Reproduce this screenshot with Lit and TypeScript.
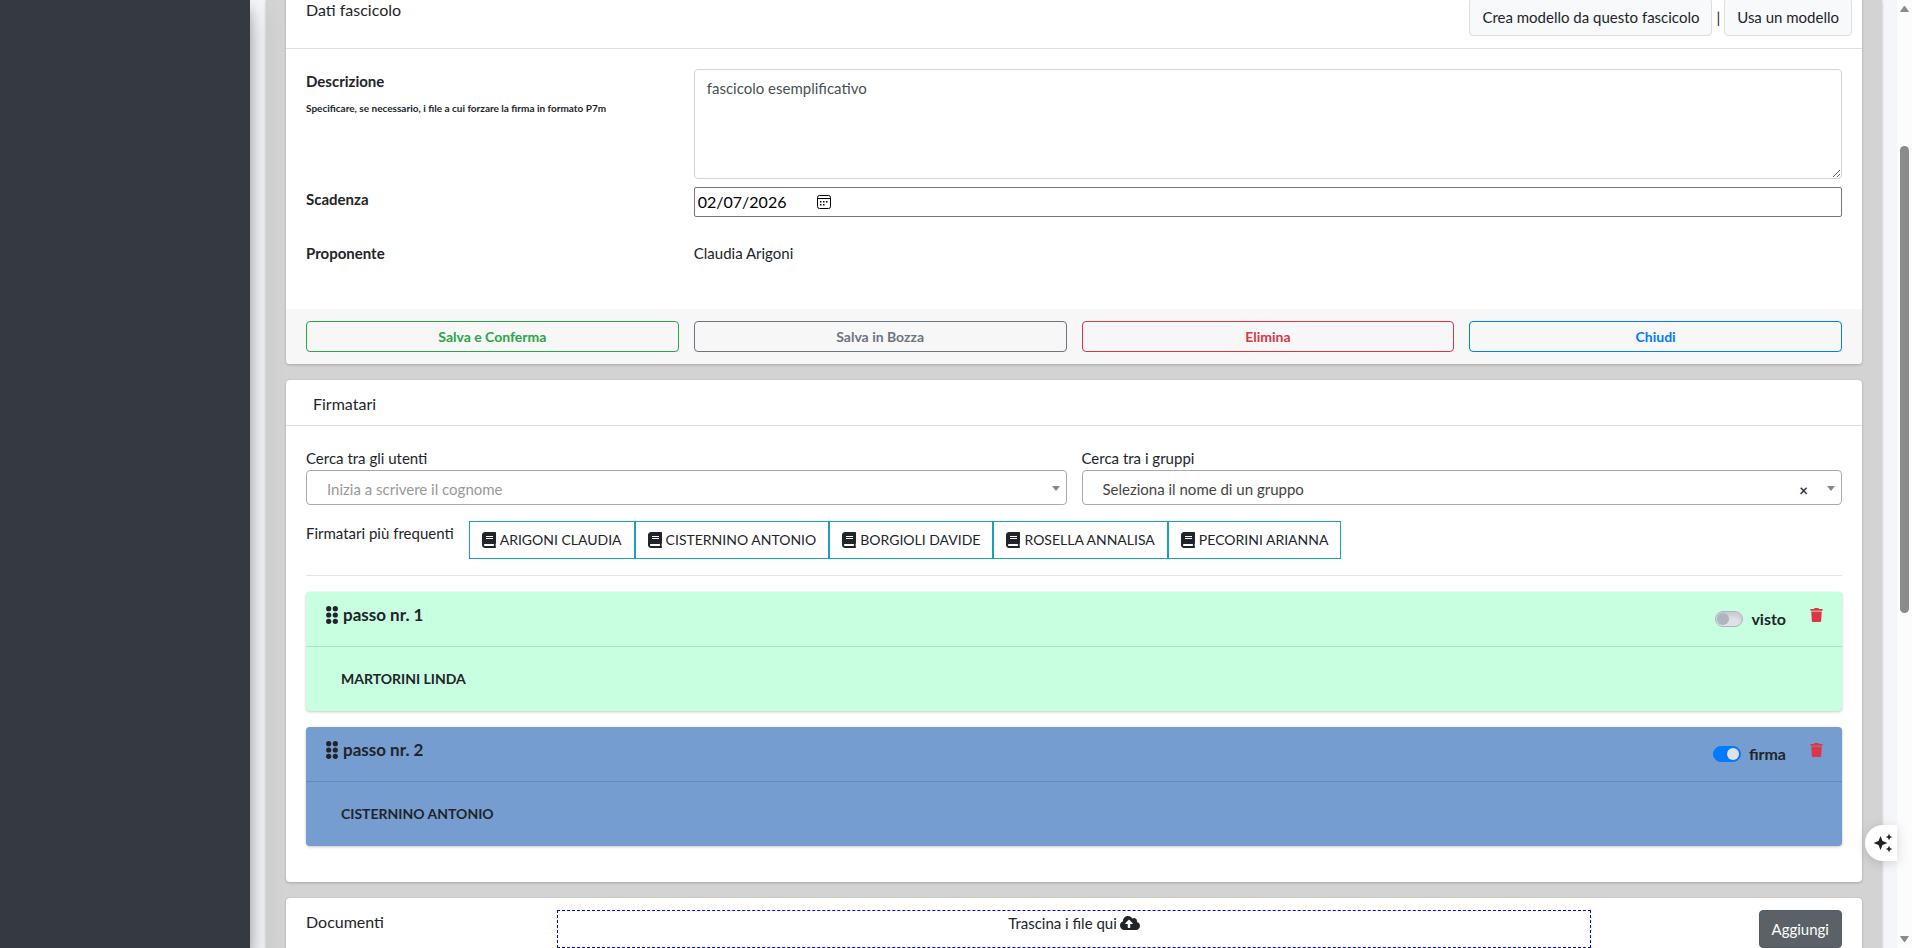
import { LitElement, html, css, svg, nothing } from 'lit';
import { customElement, property, state } from 'lit/decorators.js';
import { classMap } from 'lit/directives/class-map.js';

interface Step {
  signer: string;
  kind: 'visto' | 'firma';
}

const bookIcon = svg`
  <svg class="icon-book" viewBox="0 0 448 512" aria-hidden="true">
    <path fill="currentColor" d="M448 360V24c0-13.300-10.700-24-24-24H96C43 0 0 43 0 96v320c0 53 43 96 96 96h328c13.300 0 24-10.700 24-24v-16c0-7.500-3.500-14.300-8.900-18.700-4.200-15.400-4.200-59.300 0-74.700 5.400-4.300 8.900-11.100 8.900-18.600zM128 134c0-3.300 2.700-6 6-6h212c3.300 0 6 2.700 6 6v20c0 3.300-2.700 6-6 6H134c-3.300 0-6-2.700-6-6v-20zm0 64c0-3.300 2.700-6 6-6h212c3.300 0 6 2.700 6 6v20c0 3.300-2.700 6-6 6H134c-3.300 0-6-2.700-6-6v-20zm253.400 250H96c-17.700 0-32-14.300-32-32 0-17.600 14.400-32 32-32h285.400c-1.900 17.100-1.900 46.900 0 64z"/>
  </svg>`;

const trashIcon = svg`
  <svg class="icon-trash" viewBox="0 0 448 512" aria-hidden="true">
    <path fill="currentColor" d="M432 32H312l-9.400-18.700A24 24 0 0 0 281.100 0H166.800a23.720 23.720 0 0 0-21.400 13.300L136 32H16A16 16 0 0 0 0 48v32a16 16 0 0 0 16 16h416a16 16 0 0 0 16-16V48a16 16 0 0 0-16-16zM32 128h384l-21.200 339a48 48 0 0 1-47.900 45H101.100a48 48 0 0 1-47.900-45z"/>
  </svg>`;

const cloudIcon = svg`
  <svg class="icon-cloud" viewBox="0 0 640 512" aria-hidden="true">
    <path fill="currentColor" d="M537.600 226.600c4.100-10.700 6.400-22.400 6.400-34.600 0-53-43-96-96-96-19.700 0-38.100 6-53.300 16.200C367 64.200 315.300 32 256 32c-88.400 0-160 71.600-160 160 0 2.700.1 5.400.2 8.100C40.200 219.800 0 273.200 0 336c0 79.500 64.500 144 144 144h368c70.700 0 128-57.300 128-128 0-61.900-44-113.600-102.400-125.400zM393.400 288H328v112c0 8.800-7.200 16-16 16h-48c-8.800 0-16-7.200-16-16V288h-65.400c-14.300 0-21.400-17.200-11.300-27.300l105.400-105.400c6.200-6.200 16.400-6.200 22.600 0l105.400 105.400c10.100 10.100 2.900 27.300-11.300 27.300z"/>
  </svg>`;

const calendarIcon = svg`
  <svg viewBox="0 0 14 14" width="14" height="14" aria-hidden="true">
    <rect x="0.500" y="0.500" width="13" height="13" rx="2" fill="none" stroke="currentColor"/>
    <path d="M1 3.500h12" stroke="currentColor"/>
    <path fill="currentColor" d="M3 6h1.500v1.500H3zM6 6h1.500v1.500H6zM9 6h1.500v1.500H9zM3 9h1.500v1.500H3zM6 9h1.500v1.500H6z"/>
  </svg>`;

const gripIcon = svg`
  <svg class="icon-grip" viewBox="0 0 12 18" aria-hidden="true">
    <g fill="currentColor">
      <circle cx="2.700" cy="2.700" r="2.600"/><circle cx="9.300" cy="2.700" r="2.600"/>
      <circle cx="2.700" cy="9" r="2.600"/><circle cx="9.300" cy="9" r="2.600"/>
      <circle cx="2.700" cy="15.300" r="2.600"/><circle cx="9.300" cy="15.300" r="2.600"/>
    </g>
  </svg>`;

/**
 * One step of the signature flow: a coloured card with the signer below
 * its heading and a switch between "visto" and "firma".
 *
 * @fires step-remove - Emitted when the bin is clicked
 */
@customElement('step-card')
export class StepCard extends LitElement {
  static styles = css`
    :host {
      display: block;
    }

    .card {
      border-radius: 4px;
      box-shadow: 0 0 1px rgba(0, 0, 0, 0.125), 0 1px 3px rgba(0, 0, 0, 0.2);
    }

    .visto {
      background: #c8ffe0;
    }

    .firma {
      background: #759dd0;
    }

    .header {
      display: flex;
      align-items: flex-start;
      min-height: 30px;
      padding: 12px 19px 12px 20px;
      border-bottom: 1px solid rgba(0, 0, 0, 0.125);
    }

    h3 {
      display: flex;
      align-items: center;
      gap: 5px;
      flex: 1;
      margin: 0;
      font-size: 17px;
      font-weight: 700;
      line-height: 22px;
    }

    .icon-grip {
      width: 12px;
      height: 18px;
    }

    .switch {
      display: flex;
      align-items: center;
      gap: 8px;
      margin: 3px 24px 0 0;
      font-size: 16px;
      font-weight: 700;
      line-height: 24px;
    }

    .switch input {
      appearance: none;
      display: flex;
      align-items: center;
      box-sizing: border-box;
      width: 28px;
      height: 16px;
      margin: 0;
      padding: 0 1px;
      border: 1px solid #adb5bd;
      border-radius: 8px;
      background: #dee2e6;
      box-shadow: inset 0 4px 4px rgba(0, 0, 0, 0.1);
    }

    .switch input::before {
      content: '';
      width: 12px;
      height: 12px;
      border-radius: 6px;
      background: #adb5bd;
    }

    .switch input:checked {
      justify-content: flex-end;
      border-color: #007bff;
      background: #007bff;
      box-shadow: none;
    }

    .switch input:checked::before {
      background: #dee2e6;
    }

    .remove {
      display: flex;
      align-items: center;
      height: 22px;
      padding: 0;
      border: 0;
      background: none;
      color: #dc3545;
      cursor: pointer;
    }

    .icon-trash {
      width: 13px;
      height: 14px;
    }

    .signer {
      margin: 0;
      padding: 20px 35px;
      font-size: 14px;
      font-weight: 700;
      line-height: 24px;
    }
  `;

  @property({ type: Number }) number = 1;
  @property({ type: String }) signer = '';
  @property({ type: String }) kind: 'visto' | 'firma' = 'visto';

  private toggleKind() {
    this.kind = this.kind === 'visto' ? 'firma' : 'visto';
  }

  private handleRemove() {
    this.dispatchEvent(new CustomEvent('step-remove', { bubbles: true, composed: true }));
  }

  render() {
    return html`
      <article class=${classMap({ card: true, [this.kind]: true })}>
        <div class="header">
          <h3>${gripIcon} passo nr. ${this.number}</h3>
          <label class="switch">
            <input type="checkbox" .checked=${this.kind === 'firma'} @change=${this.toggleKind} />
            ${this.kind}
          </label>
          <button class="remove" type="button" aria-label="Rimuovi passo" @click=${this.handleRemove}>
            ${trashIcon}
          </button>
        </div>
        <p class="signer">${this.signer}</p>
      </article>
    `;
  }
}

@customElement('app-root')
export class AppRoot extends LitElement {
  static styles = css`
    :host {
      display: flex;
      height: 100vh;
      overflow: hidden;
      background: #f4f6f9;
      color: #212529;
      font-family: Lato, 'Liberation Sans', sans-serif;
      font-size: 15px;
      font-weight: 400;
      line-height: 24px;
    }

    button,
    input,
    select,
    textarea {
      box-sizing: border-box;
      font: inherit;
      color: inherit;
    }

    h2 {
      margin: 3px 0 1px;
      font-size: 16px;
      font-weight: 400;
      line-height: 18px;
    }

    .sidebar {
      z-index: 1;
      flex: 0 0 250px;
      background: #343a40;
      box-shadow: 0 14px 28px rgba(0, 0, 0, 0.25), 0 10px 10px rgba(0, 0, 0, 0.22);
    }

    .viewport {
      flex: 1;
      min-width: 0;
      padding: 0 15px 0 16px;
      overflow: hidden;
    }

    .content {
      display: flex;
      flex-direction: column;
      gap: 16px;
      padding: 0 20px 20px;
      background: #d3d3d3;
      box-shadow: 0 0 1px rgba(0, 0, 0, 0.125), 0 1px 3px rgba(0, 0, 0, 0.2);
    }

    .card {
      border-radius: 4px;
      background: #fff;
      box-shadow: 0 0 1px rgba(0, 0, 0, 0.125), 0 1px 3px rgba(0, 0, 0, 0.2);
    }

    /* the page is scrolled a little past the top edge of the first card */
    .scrolled {
      margin-top: -14px;
    }

    .card-header {
      display: flex;
      padding: 12px 20px;
      border-bottom: 1px solid rgba(0, 0, 0, 0.125);
    }

    .case-header {
      justify-content: space-between;
      padding-right: 10px;
    }

    .signers-header {
      padding: 12px 27px 11px;
    }

    .card-body {
      padding: 20px;
    }

    .actions {
      display: flex;
      align-items: center;
      gap: 4px;
    }

    .btn {
      height: 38px;
      padding: 0 12px;
      border: 1px solid #ddd;
      border-radius: 4px;
      background: #f8f9fa;
      color: #212529;
      cursor: pointer;
    }

    .btn-dark {
      justify-self: end;
      margin-right: 8px;
      border-color: #545b62;
      background: #5a6268;
      color: #fff;
    }

    /* Case form */
    .form {
      display: grid;
      grid-template-columns: repeat(4, 1fr);
      gap: 8px 15px;
      padding-bottom: 44px;
    }

    .form-label {
      font-weight: 700;
    }

    .hint {
      display: block;
      margin-top: 8px;
      font-size: 10px;
      line-height: 14px;
    }

    .wide {
      grid-column: span 3;
    }

    textarea.wide {
      width: 100%;
      height: 110px;
      padding: 6px 12px;
      border: 1px solid #ced4da;
      border-radius: 4px;
      color: #495057;
    }

    .date {
      display: flex;
      align-items: center;
      height: 30px;
      box-sizing: border-box;
      border: 1px solid #767676;
      border-radius: 2px;
      color: #000;
      font-size: 16px;
    }

    .date input {
      width: 122px;
      padding: 0 3px;
      border: 0;
      background: none;
    }

    .date button {
      display: flex;
      padding: 0;
      border: 0;
      background: none;
    }

    .proposer {
      margin-top: 16px;
    }

    .card-footer {
      display: grid;
      grid-template-columns: repeat(4, 1fr);
      gap: 15px;
      padding: 12px 20px;
      border-radius: 0 0 4px 4px;
      background: #f7f7f7;
    }

    .btn-outline {
      height: 31px;
      padding: 0 8px;
      border: 1px solid currentColor;
      border-radius: 4px;
      background: none;
      font-size: 14px;
      font-weight: 700;
      cursor: pointer;
    }

    .success {
      color: #28a745;
    }

    .secondary {
      color: #6c757d;
    }

    .danger {
      color: #dc3545;
    }

    .primary {
      color: #007bff;
    }

    /* Signers */
    .searches {
      display: grid;
      grid-template-columns: repeat(2, 1fr);
      gap: 15px;
    }

    .search label {
      display: block;
    }

    .select {
      position: relative;
    }

    .select select {
      appearance: none;
      display: block;
      width: 100%;
      height: 35px;
      padding: 3px 20px 0;
      border: 1px solid #aaa;
      border-radius: 4px;
      background: #fff;
      color: #444;
    }

    .select .placeholder {
      color: #999;
    }

    .select::after {
      content: '';
      position: absolute;
      top: 16px;
      right: 7px;
      border: 4px solid transparent;
      border-top: 5px solid #888;
      border-bottom: 0;
      pointer-events: none;
    }

    .clear {
      position: absolute;
      top: 8px;
      right: 34px;
      padding: 0;
      border: 0;
      background: none;
      color: #333;
      font-weight: 700;
    }

    .frequent {
      display: flex;
      gap: 15px;
      margin-top: 16px;
    }

    .group {
      display: flex;
    }

    .signer-btn {
      display: flex;
      align-items: center;
      gap: 4px;
      height: 38px;
      padding: 0 12px;
      border: 1px solid #17a2b8;
      background: #fff;
      font-size: 14px;
      white-space: nowrap;
      cursor: pointer;
    }

    .icon-book {
      width: 14px;
      height: 16px;
    }

    hr {
      margin: 16px 0;
      border: 0;
      border-top: 1px solid rgba(0, 0, 0, 0.1);
    }

    .steps {
      display: flex;
      flex-direction: column;
      gap: 16px;
      padding-bottom: 16px;
    }

    /* Documents */
    .documents-header {
      display: grid;
      grid-template-columns: 1fr 4fr 1fr;
      padding: 12px;
    }

    .documents-header h2 {
      padding-left: 8px;
    }

    .dropzone {
      display: flex;
      justify-content: center;
      gap: 3px;
      height: 38px;
      box-sizing: border-box;
      border: 1px dashed #00f;
    }

    .icon-cloud {
      width: 20px;
      height: 16px;
      margin-top: 4px;
    }

    /* Scrollbar and assistant tab */
    .scrollbar {
      display: flex;
      flex: 0 0 15px;
      flex-direction: column;
      align-items: center;
      background: #fcfcfc;
    }

    .scrollbar svg {
      width: 9px;
      height: 18px;
    }

    .before {
      flex: 128;
    }

    .thumb {
      flex: 467;
      width: 9px;
      border-radius: 5px;
      background: #8b8b8b;
    }

    .after {
      flex: 317;
    }

    .assistant {
      position: absolute;
      z-index: 2;
      right: 15px;
      bottom: 87px;
      display: flex;
      align-items: center;
      width: 32px;
      height: 36px;
      padding: 0 0 0 8px;
      border: 0;
      border-radius: 18px 0 0 18px;
      background: #fff;
      box-shadow: 0 2px 12px rgba(0, 0, 0, 0.15);
    }
  `;

  @state() private steps: Step[] = [
    { signer: 'MARTORINI LINDA', kind: 'visto' },
    { signer: 'CISTERNINO ANTONIO', kind: 'firma' },
  ];

  private frequentSigners = [
    'ARIGONI CLAUDIA',
    'CISTERNINO ANTONIO',
    'BORGIOLI DAVIDE',
    'ROSELLA ANNALISA',
    'PECORINI ARIANNA',
  ];

  private addStep(signer: string) {
    this.steps = [...this.steps, { signer, kind: 'firma' }];
  }

  private removeStep(step: Step) {
    this.steps = this.steps.filter((s) => s !== step);
  }

  private renderCase() {
    return html`
      <section class="card scrolled">
        <div class="card-header case-header">
          <h2>Dati fascicolo</h2>
          <div class="actions">
            <button class="btn" type="button">Crea modello da questo fascicolo</button>
            <span>|</span>
            <button class="btn" type="button">Usa un modello</button>
          </div>
        </div>
        <div class="card-body form">
          <label class="form-label" for="description">
            Descrizione
            <span class="hint">Specificare, se necessario, i file a cui forzare la firma in formato P7m</span>
          </label>
          <textarea class="wide" id="description" .value=${'fascicolo esemplificativo'}></textarea>
          <label class="form-label" for="due">Scadenza</label>
          <div class="wide date">
            <input id="due" type="text" inputmode="numeric" .value=${'02/07/2026'} />
            <button type="button" aria-label="Apri calendario">${calendarIcon}</button>
          </div>
          <span class="form-label proposer">Proponente</span>
          <span class="wide proposer">Claudia Arigoni</span>
        </div>
        <div class="card-footer">
          <button class="btn-outline success" type="button">Salva e Conferma</button>
          <button class="btn-outline secondary" type="button">Salva in Bozza</button>
          <button class="btn-outline danger" type="button">Elimina</button>
          <button class="btn-outline primary" type="button">Chiudi</button>
        </div>
      </section>
    `;
  }

  private renderSearch(id: string, label: string, text: string, clearable: boolean) {
    return html`
      <div class="search">
        <label for=${id}>${label}</label>
        <div class="select">
          <select id=${id} class=${classMap({ placeholder: !clearable })}>
            <option>${text}</option>
          </select>
          ${clearable
            ? html`<button class="clear" type="button" aria-label="Svuota">×</button>`
            : nothing}
        </div>
      </div>
    `;
  }

  private renderSigners() {
    return html`
      <section class="card">
        <div class="card-header signers-header"><h2>Firmatari</h2></div>
        <div class="card-body">
          <div class="searches">
            ${this.renderSearch('users', 'Cerca tra gli utenti', 'Inizia a scrivere il cognome', false)}
            ${this.renderSearch('groups', 'Cerca tra i gruppi', 'Seleziona il nome di un gruppo', true)}
          </div>
          <div class="frequent">
            <span>Firmatari più frequenti</span>
            <div class="group">
              ${this.frequentSigners.map(
                (name) => html`
                  <button class="signer-btn" type="button" @click=${() => this.addStep(name)}>
                    ${bookIcon} ${name}
                  </button>
                `
              )}
            </div>
          </div>
          <hr />
          <div class="steps">
            ${this.steps.map(
              (step, i) => html`
                <step-card
                  .number=${i + 1}
                  .signer=${step.signer}
                  .kind=${step.kind}
                  @step-remove=${() => this.removeStep(step)}
                ></step-card>
              `
            )}
          </div>
        </div>
      </section>
    `;
  }

  private renderDocuments() {
    return html`
      <section class="card">
        <div class="card-header documents-header">
          <h2>Documenti</h2>
          <div class="dropzone">Trascina i file qui ${cloudIcon}</div>
          <button class="btn btn-dark" type="button">Aggiungi</button>
        </div>
      </section>
    `;
  }

  render() {
    return html`
      <aside class="sidebar"></aside>
      <main class="viewport">
        <div class="content">
          ${this.renderCase()} ${this.renderSigners()} ${this.renderDocuments()}
        </div>
      </main>
      <div class="scrollbar" aria-hidden="true">
        <svg viewBox="0 0 9 18"><path fill="#8b8b8b" d="M3.700 6.500Q4.500 5.500 5.300 6.500L8.700 11.200V12H.3V11.200Z"/></svg>
        <div class="before"></div>
        <div class="thumb"></div>
        <div class="after"></div>
        <svg viewBox="0 0 9 18"><path fill="#8b8b8b" d="M3.700 11.500Q4.500 12.500 5.300 11.500L8.700 6.800V6H.3V6.800Z"/></svg>
      </div>
      <button class="assistant" type="button" aria-label="Assistente">
        <svg viewBox="0 0 20 20" width="20" height="20" aria-hidden="true">
          <path fill="#202124" d="M7.500 3 9.500 8 14.500 10 9.500 12 7.500 17 5.500 12 .5 10 5.500 8ZM16 .8l1 2.200 2.200 1-2.200 1-1 2.200L15 5l-2.200-1L15 3ZM16 12.800l1 2.200 2.200 1-2.200 1-1 2.200L15 17l-2.200-1 2.200-1Z"/>
        </svg>
      </button>
    `;
  }
}

declare global {
  interface HTMLElementTagNameMap {
    'app-root': AppRoot;
    'step-card': StepCard;
  }
}
